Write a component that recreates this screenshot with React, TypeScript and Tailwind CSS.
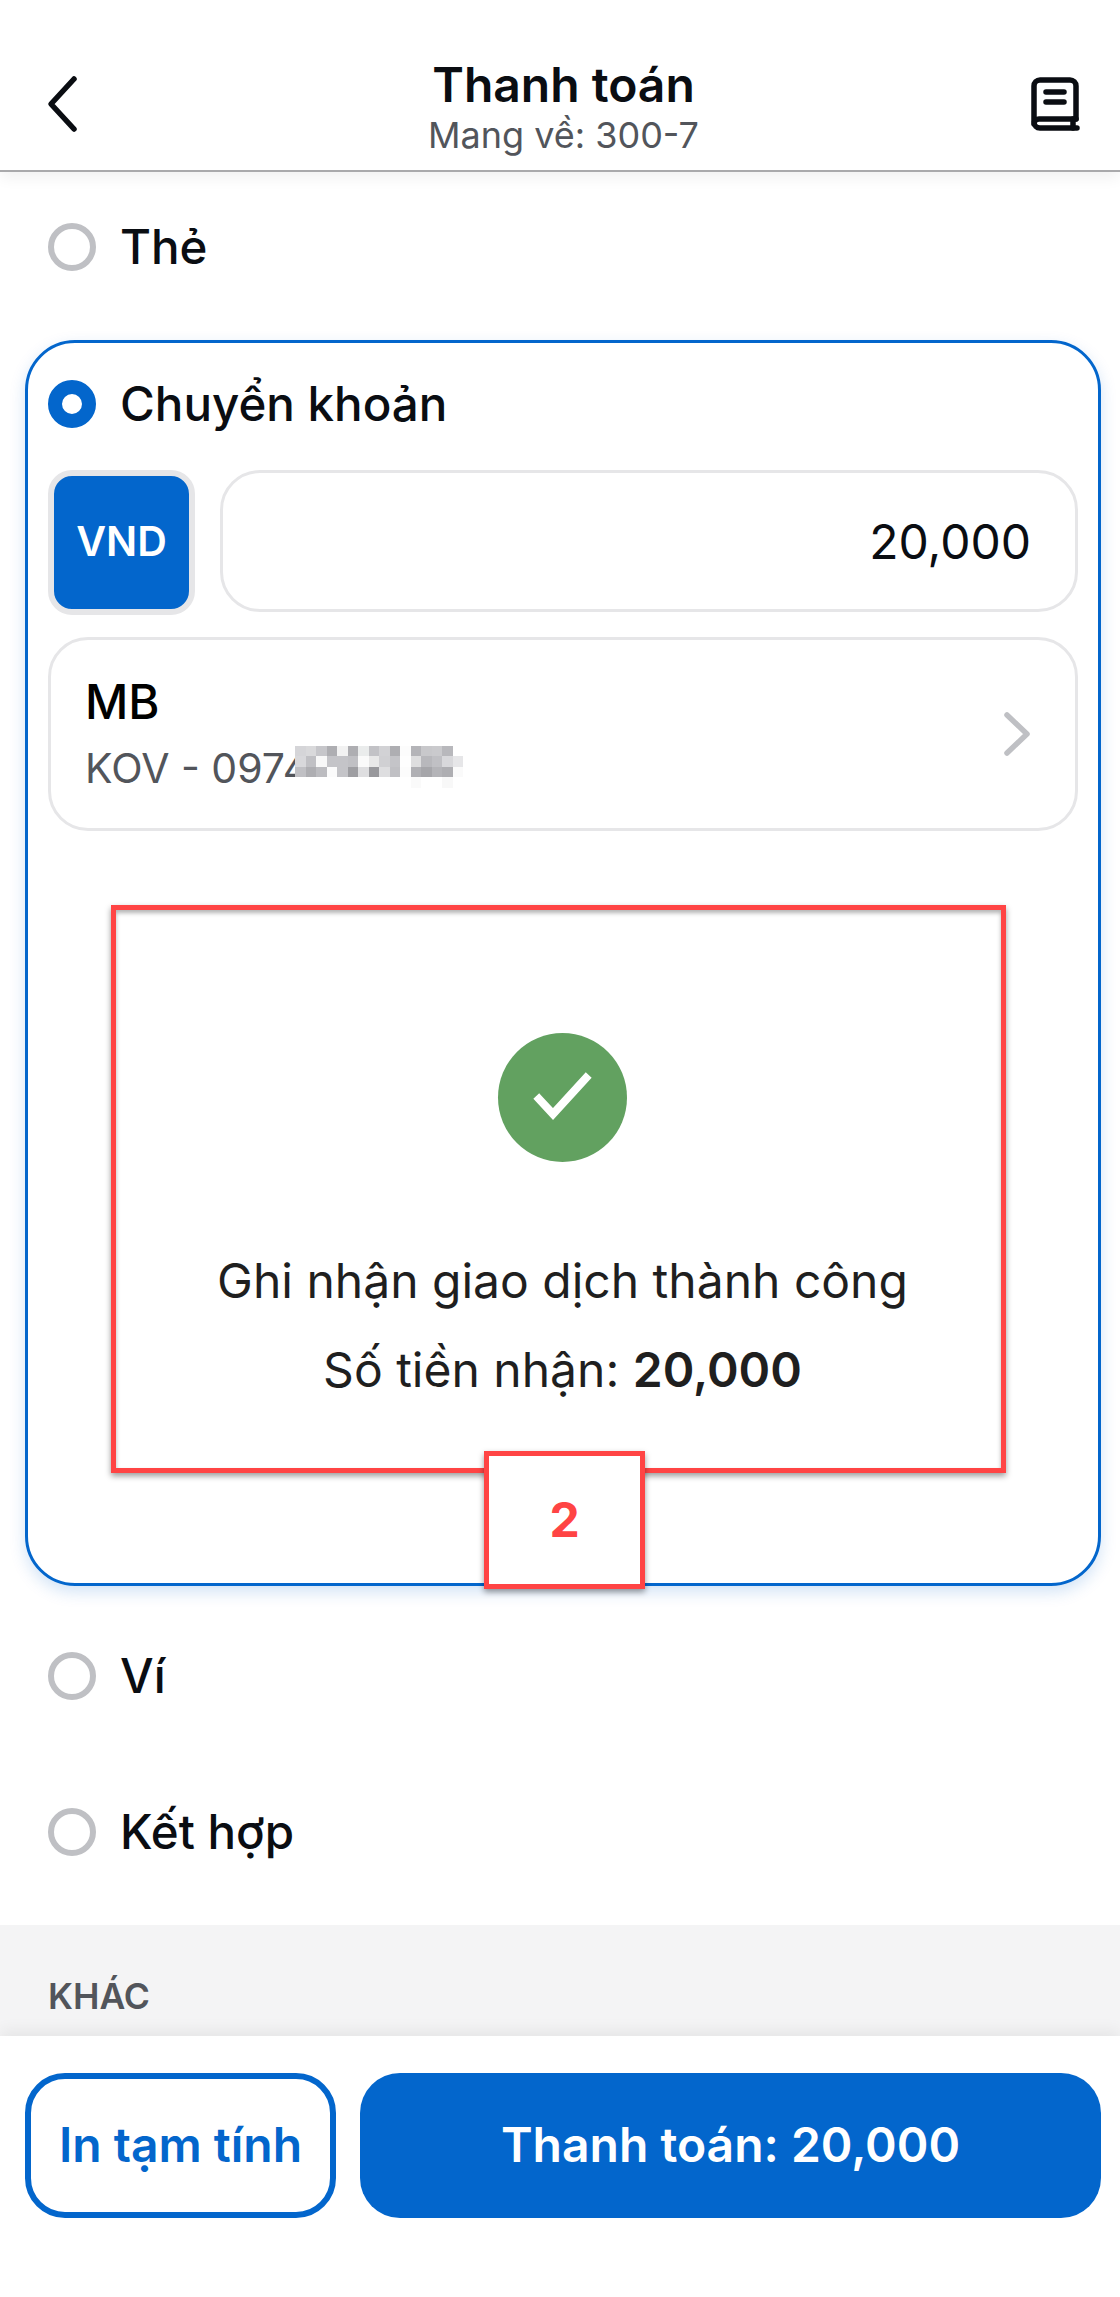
const mosaic = [
  ['#d5d5d8', '#d9d9db', '#c6c6ca', '#aeaeb2', '#f2f2f2', '#aeaeb2', '#eaecec', '#c2c2c6', '#d2d2d5', '#aeaeb2', '#fcfcfc', '#b4b4b8', '#c8c8cb', '#cacacd', '#b8b8bc', '#ffffff'],
  ['#d8d8db', '#c0c0c4', '#f8f8f8', '#c4c4c8', '#c4c4c8', '#c0c0c4', '#fafafa', '#e8e8e8', '#d0d0d3', '#c4c4c8', '#fefefe', '#dededf', '#b8b8bc', '#c0c0c4', '#d8d8db', '#e6e6e8'],
  ['#c0c0c4', '#aeaeb2', '#bcbcc0', '#fbfbfb', '#c4c4c8', '#9e9ea2', '#dedee0', '#98989c', '#dedee0', '#c0c0c4', '#fcfcfc', '#b0b0b4', '#a6a6aa', '#b4b4b8', '#aeaeb2', '#fafafa'],
  ['#ffffff', '#ffffff', '#ffffff', '#ffffff', '#ffffff', '#ffffff', '#ffffff', '#ffffff', '#ffffff', '#ffffff', '#ffffff', '#fafafa', '#ffffff', '#ffffff', '#f8f8f8', '#ffffff'],
]

function Radio({ label, active }: { label: string; active?: boolean }) {
  return (
    <div className="flex items-center gap-[24px]">
      <div
        className={
          active
            ? 'h-[48px] w-[48px] rounded-full border-[14px] border-[#0366cc] bg-white'
            : 'h-[48px] w-[48px] rounded-full border-[6px] border-[#bfc0c4] bg-white'
        }
      />
      <span className="text-[47.5px] leading-[56px] text-[#0a0d12] [font-weight:450]">{label}</span>
    </div>
  )
}

function BackIcon() {
  return (
    <svg width="34" height="58" viewBox="0 0 34 58" fill="none" stroke="#0a0d12" strokeWidth="5.5" strokeLinecap="round" strokeLinejoin="round">
      <path d="M29 4 6 29l23 25" />
    </svg>
  )
}

function BookIcon() {
  return (
    <svg width="50" height="56" viewBox="0 0 50 56" fill="none" stroke="#0a0d12" strokeWidth="5.5" strokeLinecap="round" strokeLinejoin="round">
      <path d="M46 43V10a6 6 0 0 0-6-6H10a6 6 0 0 0-6 6v36a6 6 0 0 0 6 6h37" />
      <path d="M4 48a5 5 0 0 1 5-5h37" />
      <path d="M43 43v9" />
      <path d="M16 16h18M16 26h18" />
    </svg>
  )
}

export default function App() {
  return (
    <div className="relative flex h-[2297px] w-full flex-col overflow-hidden bg-white font-['Inter',sans-serif]">
      {/* header */}
      <div className="relative z-10 flex h-[172px] items-end justify-between border-b-2 border-[#a9a9ab] bg-white pb-[14px] pl-[45px] pr-[40px] shadow-[0_6px_14px_rgba(0,0,0,0.06)]">
        <div className="mb-[23px]">
          <BackIcon />
        </div>
        <div className="flex flex-col items-center pl-[18px]">
          <h1 className="text-[48px] font-semibold leading-[54px] text-[#0a0d12]">Thanh toán</h1>
          <p className="pt-[2px] text-[36px] leading-[42px] text-[#52555b]">Mang về: 300-7</p>
        </div>
        <div className="mb-[24px]">
          <BookIcon />
        </div>
      </div>

      <div className="flex-1">
        <div className="flex h-[151px] items-center pl-[48px]">
          <Radio label="Thẻ" />
        </div>

        {/* selected method */}
        <div className="relative ml-[25px] mr-[19px] mt-[17px] h-[1246px] rounded-[50px] border-[3px] border-[#0366cc] bg-white px-[20px] shadow-[0_6px_16px_rgba(3,102,204,0.18)]">
          <div className="flex h-[122px] items-center">
            <Radio label="Chuyển khoản" active />
          </div>

          <div className="mt-[5px] flex items-start gap-[25px]">
            <div className="flex h-[145px] w-[147px] items-center justify-center rounded-[24px] border-[6px] border-[#e6e6e8] bg-[#0366cc]">
              <span className="text-[41px] font-semibold text-white">VND</span>
            </div>
            <div className="flex h-[142px] flex-1 items-center justify-end rounded-[40px] border-[3px] border-[#e6e6e8] pr-[44px] pt-[2px]">
              <span className="text-[48px] leading-[56px] text-[#0a0d12]">20,000</span>
            </div>
          </div>

          <div className="mt-[22px] flex h-[194px] items-center justify-between rounded-[40px] border-[3px] border-[#e6e6e8] pl-[34px] pr-[44px]">
            <div className="-mt-[2px]">
              <p className="text-[47.5px] leading-[56px] text-black [font-weight:450]">MB</p>
              <div className="mt-[14px] flex items-start">
                <span className="text-[41px] leading-[48px] text-[#52555b]">KOV - 0974</span>
                <div className="-ml-[14px] mt-[2px] flex flex-col">
                  {mosaic.map((row, i) => (
                    <div key={i} className="flex">
                      {row.map((color, j) => (
                        <div key={j} className="h-[10.5px] w-[10.5px]" style={{ backgroundColor: color }} />
                      ))}
                    </div>
                  ))}
                </div>
              </div>
            </div>
            <svg width="30" height="46" viewBox="0 0 30 46" fill="none" stroke="#bfc0c4" strokeWidth="5.5" strokeLinecap="round" strokeLinejoin="round">
              <path d="M6 4l20 19L6 42" />
            </svg>
          </div>

          {/* annotated region */}
          <div className="ml-[63px] mt-[74px] flex h-[568px] w-[895px] flex-col items-center border-[5px] border-[#ff4444] pl-[8px] pt-[123px] shadow-[0_3px_6px_rgba(0,0,0,0.4),inset_0_3px_4px_rgba(0,0,0,0.3)]">
            <div className="flex h-[129px] w-[129px] items-center justify-center rounded-full bg-[#62a160]">
              <svg width="66" height="56" viewBox="0 0 66 56" fill="none" stroke="white" strokeWidth="8" strokeLinecap="square">
                <path d="M9 30l14 15L56 9" />
              </svg>
            </div>
            <p className="mt-[74px] text-[48px] leading-[89px] text-[#1f1f1f]">Ghi nhận giao dịch thành công</p>
            <p className="text-[48px] leading-[89px] text-[#1f1f1f]">
              Số tiền nhận: <span className="font-semibold">20,000</span>
            </p>
          </div>

          <div className="absolute left-[456px] top-[1108px] flex h-[138px] w-[161px] items-center justify-center border-[5px] border-[#ff4444] bg-white shadow-[0_3px_6px_rgba(0,0,0,0.4)]">
            <span className="text-[48px] font-bold leading-[56px] text-[#ff4444]">2</span>
          </div>
        </div>

        <div className="mt-[12px] flex h-[156px] items-center pl-[48px]">
          <Radio label="Ví" />
        </div>
        <div className="flex h-[156px] items-center pl-[48px]">
          <Radio label="Kết hợp" />
        </div>

        <div className="mt-[15px] h-[111px] bg-[#f4f4f5] pl-[48px] pt-[52px]">
          <span className="text-[35.5px] font-semibold leading-[40px] text-[#52555b]">KHÁC</span>
        </div>
      </div>

      {/* footer */}
      <div className="relative z-10 flex h-[262px] items-start gap-[24px] bg-white pl-[25px] pr-[19px] pt-[37px] shadow-[0_-6px_14px_rgba(0,0,0,0.06)]">
        <button className="h-[145px] w-[311px] rounded-[40px] border-[6px] border-[#0366cc] bg-white text-[48px] font-semibold text-[#0366cc]">
          In tạm tính
        </button>
        <button className="h-[145px] flex-1 rounded-[40px] bg-[#0366cc] text-[48px] font-semibold text-white">
          Thanh toán: 20,000
        </button>
      </div>
    </div>
  )
}
